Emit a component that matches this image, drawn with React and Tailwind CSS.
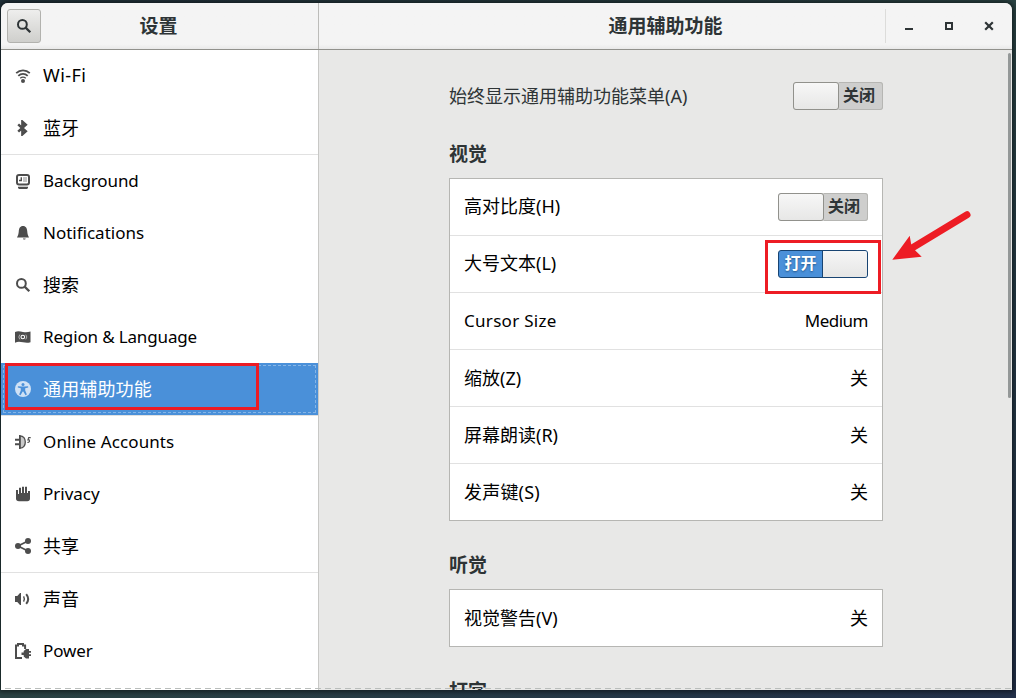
import React from "react";

function Icon({ children, className = "" }) {
  return (
    <svg width="16" height="16" viewBox="0 0 16 16" fill="currentColor" className={`shrink-0 ${className}`}>
      {children}
    </svg>
  );
}

const WifiIcon = () => (
  <Icon>
    <g fill="none" stroke="currentColor" strokeWidth="1.8">
      <path d="M1.2 5.2C5 1.5 11 1.5 14.8 5.2" />
      <path d="M3.3 7.9C6 5.3 10 5.3 12.7 7.9" />
      <path d="M5.2 10.3C6.9 8.9 9.1 8.9 10.8 10.3" strokeWidth="1.3" />
    </g>
    <circle cx="8" cy="13" r="2" />
  </Icon>
);

const BluetoothIcon = () => (
  <Icon>
    <path d="M3.2 4.4 10.8 11.2 7.4 14.3V1.700L10.8 4.800 3.200 11.600" fill="none" stroke="currentColor" strokeWidth="2.5" />
  </Icon>
);

const BackgroundIcon = () => (
  <Icon>
    <rect x="2" y="2" width="12" height="9.5" rx="2" fill="none" stroke="currentColor" strokeWidth="2" />
    <rect x="3.5" y="3.5" width="9" height="6.5" fill="#fff" />
    <rect x="8" y="4" width="4" height="5" fill="#c4c4c4" />
    <path d="M4 8.2V6.7h1.6V4.2H7v4z" />
    <path d="M3 13.8h10v1.2l-1 1H4l-1-1z" />
  </Icon>
);

const BellIcon = () => (
  <Icon>
    <path d="M8 1C5 1 4 3.5 3.8 6 3.6 9 3 10.5 2 12.6h12c-1-2.1-1.6-3.6-1.8-6.6C12 3.5 11 1 8 1z" />
    <path d="M8 13.4h2.6v.5q-1.3 1-2.6 0z" />
  </Icon>
);

const SearchIcon = () => (
  <Icon>
    <circle cx="6.4" cy="6.4" r="4.4" fill="none" stroke="currentColor" strokeWidth="2" />
    <path d="m9.6 9.6 4.7 4.7" stroke="currentColor" strokeWidth="2.3" />
  </Icon>
);

const RegionIcon = () => (
  <Icon>
    <path d="M0 3c3-1.4 5-.6 8 0 3 .5 5 .2 7.500-.5v10.700c-3 1-5 .6-7.500.1-3-.6-5-1-8 .4z" />
    <circle cx="7.8" cy="8" r="1.8" fill="none" stroke="#fff" strokeWidth="1.1" />
    <path d="M4.8 5.6Q2.8 8 4.8 10.4M10.8 5.6Q12.8 8 10.8 10.4" fill="none" stroke="#c8c8c8" strokeWidth=".8" />
  </Icon>
);

const AccessIcon = () => (
  <Icon className="text-[#cfe1f5]">
    <circle cx="8" cy="8" r="8" />
    <circle cx="8" cy="3.4" r="1.5" fill="#4a90d9" />
    <path d="M2.9 5.2 6.5 5.5h3l3.6-.3.1 1.2-3 .8v2.3l1.7 4-1.4.7L8.3 10.6h-.6L5.5 14.2l-1.4-.7 1.7-4V7.2l-3-.8z" fill="#4a90d9" />
  </Icon>
);

const AccountsIcon = () => (
  <Icon>
    <path d="M0 4.800h5v2H0zM0 9.200h5v2H0z" />
    <path d="M5 1.8c3.5 0 5.3 2.8 5.3 6.2S8.5 14.2 5 14.2z" fill="#c9c9c9" stroke="currentColor" strokeWidth="1.3" />
    <path d="M4 1h1.500v14H4z" />
    <path d="M15.700 3.600h-2L12.900 5.900h1.300q1.200 2.200-1.800 2.600" fill="none" stroke="currentColor" strokeWidth="1.1" />
  </Icon>
);

const HandIcon = () => (
  <Icon>
    <path d="M1 4h2v4h1V1.8h2V7h1V.8h2V7h1V.8h2V7h1V5h2v7.500q0 2.700-2.700 2.700H4Q1 15.200 1 12.500z" />
  </Icon>
);

const ShareIcon = () => (
  <Icon>
    <path d="M13 3 3 8l10 5" fill="none" stroke="currentColor" strokeWidth="1.7" />
    <circle cx="3" cy="8" r="3" />
    <circle cx="13" cy="3.1" r="3" />
    <circle cx="13" cy="12.9" r="3" />
  </Icon>
);

const SoundIcon = () => (
  <Icon>
    <path d="M0 5h2.3L5 2h1v12H5l-2.700-3H0z" />
    <path d="M8.6 5.3q1.6 2.7 0 5.4" fill="none" stroke="currentColor" strokeWidth="1.4" />
    <path d="M11.2 3.1q4 4.9 0 9.8" fill="none" stroke="currentColor" strokeWidth="2" />
  </Icon>
);

const PowerIcon = () => (
  <Icon>
    <path d="M7 15H1V2.500h2V1h5v1.500h2.100V6" fill="none" stroke="currentColor" strokeWidth="2" />
    <path d="M11 6h3v2h2v1.700h-2v1.600h2V13h-2v2.500h-3L8.700 13.500V12H6.500V9.500h2.200V8z" />
  </Icon>
);

const menu = [
  { label: "Wi-Fi", icon: WifiIcon, type: "pb-0.5 tracking-[0.45px]" },
  { label: "蓝牙", icon: BluetoothIcon, line: true },
  { label: "Background", icon: BackgroundIcon, type: "text-[17px] tracking-[-0.1px]" },
  { label: "Notifications", icon: BellIcon, type: "text-[17px]" },
  { label: "搜索", icon: SearchIcon },
  { label: "Region & Language", icon: RegionIcon, type: "text-[17px] tracking-[-0.15px]" },
  { label: "通用辅助功能", icon: AccessIcon, type: "tracking-[0.15px]", active: true, line: true },
  { label: "Online Accounts", icon: AccountsIcon, type: "text-[17px] tracking-[0.1px]" },
  { label: "Privacy", icon: HandIcon, type: "text-[17px]" },
  { label: "共享", icon: ShareIcon, line: true },
  { label: "声音", icon: SoundIcon },
  { label: "Power", icon: PowerIcon, type: "text-[17px] tracking-[-0.1px]" },
];

function MenuItem({ label, icon: Glyph, type = "", active, line }) {
  return (
    <>
      <div
        className={`relative flex h-[52px] shrink-0 items-center gap-3 pl-[14px] ${
          active ? "bg-[#4a90d9] text-white" : "text-black"
        }`}
      >
        <span className={`flex ${active ? "" : "text-[#4d4d4d]"}`}>
          <Glyph />
        </span>
        <span className={`whitespace-nowrap ${type}`}>{label}</span>
        {active && (
          <>
            <div className="absolute inset-x-[2px] inset-y-[2px] border border-dashed border-[#86b5e6]" />
            <div className="absolute top-0 left-1 h-[47px] w-[254px] border-[3px] border-[#ed1c24]" />
          </>
        )}
      </div>
      {line && <div className="h-px shrink-0 bg-[#e1e1e1]" />}
    </>
  );
}

function Switch({ on }) {
  if (on) {
    return (
      <div className="flex h-7 w-[90px] overflow-hidden rounded-[3px] border border-[#184472] bg-[#4a90d9] text-[16px] font-bold text-white">
        <span className="flex flex-1 items-center justify-center pb-0.5 [text-shadow:0_1px_2px_#25588c]">打开</span>
        <span className="w-[45px] border-l border-[#184472] bg-linear-to-b from-[#f6f6f6] to-[#e6e6e5]" />
      </div>
    );
  }
  return (
    <div className="flex h-7 w-[90px] rounded-[3px] bg-[#cececd] text-[16px] font-bold text-[#2e3436]">
      <span className="w-[46px] rounded-[3px] border border-[#91918c] bg-linear-to-b from-[#f7f7f7] to-[#e7e7e6]" />
      <span className="flex flex-1 items-center justify-center rounded-r-[3px] border-y border-r border-[#b6b6b3] pr-[3px] pb-0.5">关闭</span>
    </div>
  );
}

function Card({ children }) {
  return <div className="divide-y divide-[#e1e1e1] border border-[#b6b6b3] bg-white text-black">{children}</div>;
}

function Row({ label, value, type = "", valueType = "", children }) {
  return (
    <div className="box-content flex h-14 items-center justify-between px-[14px]">
      <span className={type}>{label}</span>
      {value ? <span className={valueType}>{value}</span> : children}
    </div>
  );
}

function Heading({ children }) {
  return <h2 className="mt-[30px] mb-[10px] h-7 text-[19px] leading-7 font-bold">{children}</h2>;
}

export default function App() {
  return (
    <div className="h-[698px] w-[1016px] overflow-hidden bg-linear-to-br from-[#22323b] via-[#2a4343] to-[#22304a] pt-[3px] pl-px font-['Noto_Sans','Noto_Sans_CJK_SC',sans-serif] text-[18px] leading-7 text-[#2e3436]">
      <div className="relative flex h-[687px] w-[1011px] flex-col overflow-hidden rounded-t-[7px] bg-[#e8e8e7] shadow-[0_0_5px_2px_rgba(0,0,0,0.5)]">
        <header className="flex h-[47px] shrink-0 border-b border-[#91918c] bg-linear-to-b from-[#f4f4f4] from-90% to-[#e9e9e9]">
          <div className="flex w-[318px] items-center border-r border-[#bcbcb9] pl-[6px]">
            <button className="flex h-[34px] w-[34px] items-center justify-center rounded-[3px] border border-[#b2b2ae] bg-linear-to-b from-[#eeeeed] to-[#cfcfcc]">
              <SearchIcon />
            </button>
            <h1 className="flex-1 pr-[42px] text-center text-[19px] font-bold">设置</h1>
          </div>
          <h1 className="flex flex-1 items-center justify-center pl-[127px] text-[19px] font-bold">通用辅助功能</h1>
          <div className="my-[6px] flex w-[127px] items-center gap-6 border-l border-[#dcdcda] pl-[15px]">
            <Icon>
              <path d="M4 10h8v2H4z" />
            </Icon>
            <Icon>
              <path d="M4 4h8v8H4zM6 6v4h4V6z" fillRule="evenodd" />
            </Icon>
            <Icon>
              <path d="m4.2 4.2 7.6 7.6m0-7.6-7.6 7.6" stroke="currentColor" strokeWidth="2.2" />
            </Icon>
          </div>
        </header>
        <div className="flex min-h-0 flex-1">
          <nav className="flex w-[318px] flex-col overflow-hidden border-r border-[#c8c8c6] bg-white">
            {menu.map((m) => (
              <MenuItem key={m.label} {...m} />
            ))}
          </nav>
          <main className="flex flex-1 overflow-hidden pt-8 pl-[130px]">
            <div className="w-[434px]">
              <div className="flex h-7 items-center justify-between">
                <span>始终显示通用辅助功能菜单(A)</span>
                <Switch />
              </div>
              <Heading>视觉</Heading>
              <Card>
                <Row label="高对比度(H)" type="pb-0.5">
                  <Switch />
                </Row>
                <Row label="大号文本(L)" type="pb-0.5">
                  <Switch on />
                </Row>
                <Row
                  label="Cursor Size"
                  value="Medium"
                  type="text-[17px] tracking-[0.3px]"
                  valueType="text-[17px] tracking-[-0.5px]"
                />
                <Row label="缩放(Z)" value="关" />
                <Row label="屏幕朗读(R)" value="关" />
                <Row label="发声键(S)" value="关" type="tracking-[0.2px]" />
              </Card>
              <Heading>听觉</Heading>
              <Card>
                <Row label="视觉警告(V)" value="关" />
              </Card>
              <Heading>打字</Heading>
            </div>
          </main>
        </div>
        <div className="absolute top-[50px] right-px h-[345px] w-[3px] rounded-full bg-[#949898]" />
        <div className="absolute inset-x-0 bottom-px h-px bg-[repeating-linear-gradient(90deg,transparent_0_4px,#b9bdbb_4px_10px)]" />
        <div className="absolute top-[237px] left-[764px] h-[54px] w-[116px] border-[3px] border-[#ed1c24]" />
        <svg className="absolute top-[203px] left-[887px]" width="90" height="62" viewBox="888 206 90 62">
          <path d="m967 214.7-57 34.5" stroke="#ed1c24" strokeWidth="7" strokeLinecap="round" />
          <path d="m892.3 259.700 17.400-24 1.600 9 3.700 5.600 6.700 6.400z" fill="#ed1c24" />
        </svg>
      </div>
    </div>
  );
}
